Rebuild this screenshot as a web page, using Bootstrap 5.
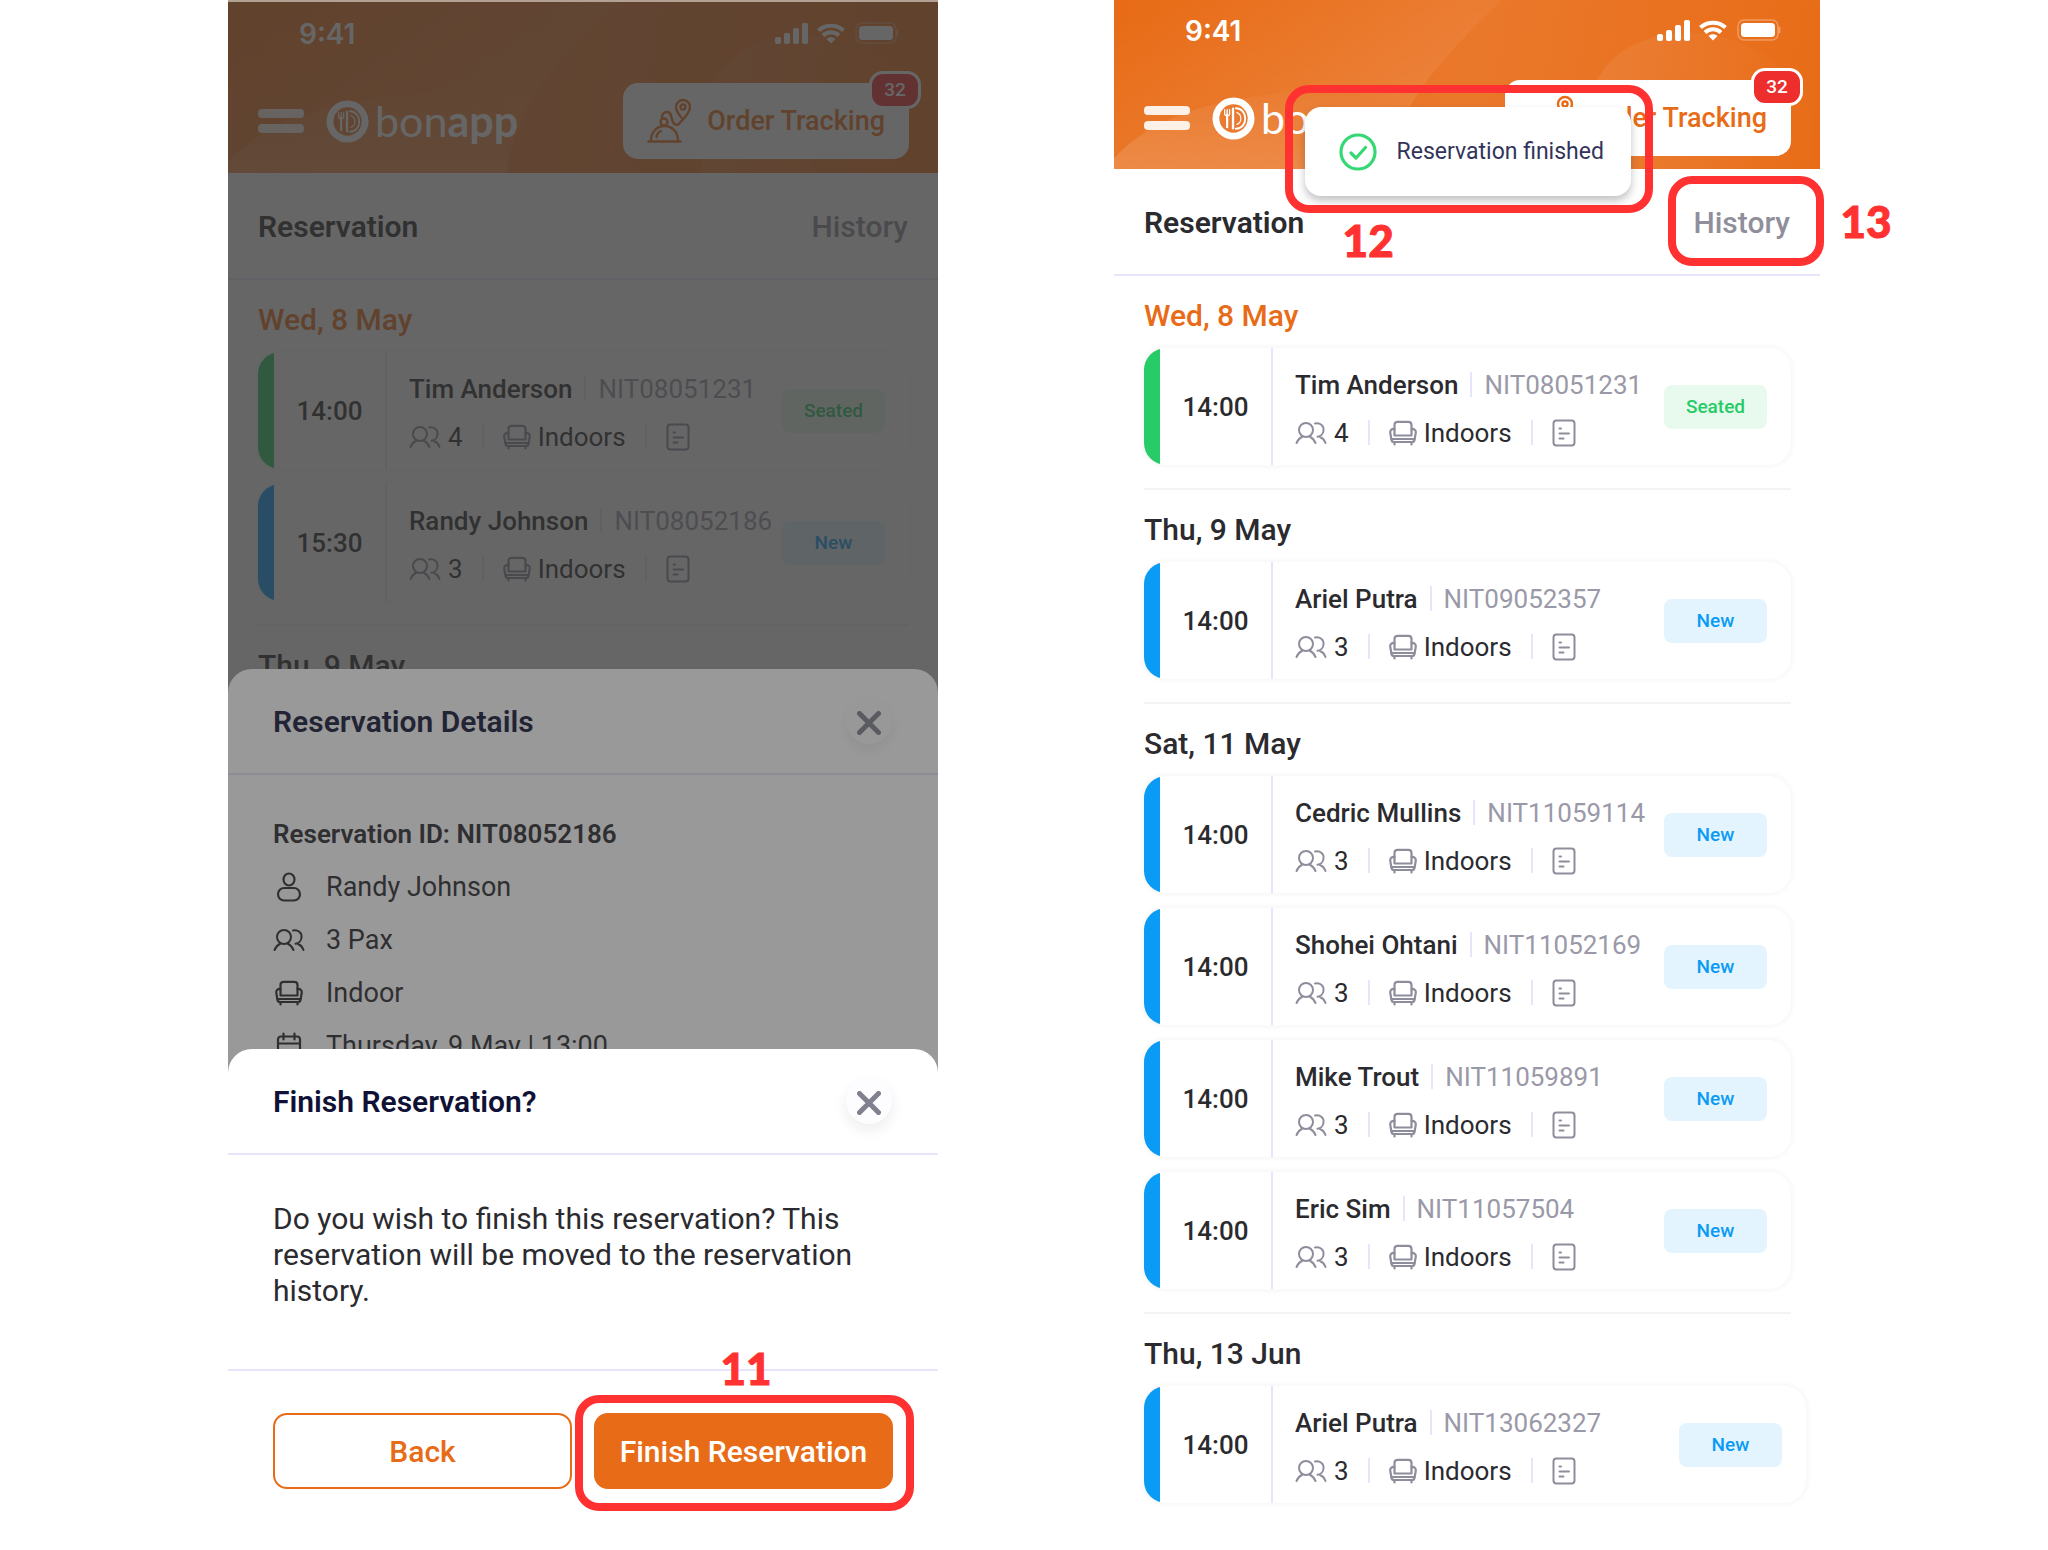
<!DOCTYPE html>
<html lang="en">
<head>
<meta charset="utf-8">
<meta name="viewport" content="width=device-width, initial-scale=1">
<title>Bonapp – finish a reservation</title>
<link href="https://cdn.jsdelivr.net/npm/bootstrap@5.3.0/dist/css/bootstrap.min.css" rel="stylesheet">
<style>
  :root { --brand:#e86c17; --ink:#2b2b2f; --muted:#9a99a8; --line:#e6e5fb; --callout:#ff3131; }
  body { font-family:Roboto,"Liberation Sans",sans-serif; font-size:26px; line-height:32px; color:var(--ink); background:#fff; }
  .guide { display:grid; grid-template-columns:228fr 710fr 176fr 706fr 228fr; min-height:100vh; }
  .phone { position:relative; background:#fff; }
  .phone-a { grid-column:2; border-top:2px solid #b3a293; overflow:hidden; }
  .phone-b { grid-column:4; }

  .app-head { position:relative; height:169px; padding:0 29px 0 30px; background:linear-gradient(100deg,#e86c17 0%,#ea782b 50%,#e86c17 100%); color:#fff; }
  .app-head > .decor { position:absolute; inset:0; width:100%; height:100%; }
  .status { position:relative; height:61px; padding:0 10px 0 41px; font-family:Inter,"Liberation Sans",sans-serif; font-weight:600; font-size:28px; }
  .brandbar { position:relative; height:114px; }
  .burger { width:46px; height:24px; padding:0; border:0; background:none; }
  .burger i { display:block; height:9px; border-radius:4px; background:#fdf0e7; }
  .burger i + i { margin-top:6px; }
  .plate { margin-left:22px; margin-right:6px; }
  .wordmark { font-family:Lato,"Liberation Sans",sans-serif; font-size:43px; line-height:42px; color:#fff; text-decoration:none; }
  .btn-track { position:relative; height:76px; padding:0 24px; border:0; border-radius:15px; background:#fff; color:var(--brand); font-size:27px; font-weight:500; }
  .btn-track:hover { background:#fff; color:var(--brand); }
  .count { position:absolute; top:-12px; right:-12px; width:52px; height:38px; border:3px solid #fff; border-radius:14px; background:#ee2d2d; color:#fff; font-size:19px; line-height:32px; text-align:center; }
  .phone-a .app-head { height:171px; padding-top:1px; }

  .tabs { height:107px; padding:2px 30px 0; border-bottom:2px solid var(--line); font-size:30px; font-weight:500; }
  .tabs a { color:inherit; text-decoration:none; }
  .tabs .on { font-weight:600; }
  .tabs .off { position:relative; color:#8f8e9b; }
  .list { padding:0 29px 0 30px; }
  .day { margin:0; height:72px; padding-top:20px; font-size:30px; line-height:40px; font-weight:500; }
  .day.today { color:var(--brand); }
  .slots { padding-bottom:23px; border-bottom:2px solid #f3f3f5; }
  .slots.last { margin-right:-15px; border:0; }
  .slot { height:117px; border-radius:22px; background:#fff; box-shadow:0 0 6px rgba(40,40,70,.07); overflow:hidden; }
  .slot + .slot { margin-top:15px; }
  .slot .edge { width:16px; flex:none; background:#0a9bf5; }
  .slot .edge.ok { background:#27cb67; }
  .slot .hour { width:113px; flex:none; border-right:2px solid var(--line); font-weight:500; }
  .slot .info { padding:4px 0 0 22px; gap:16px; white-space:nowrap; }
  .slot .who { font-weight:500; }
  .slot .ref { color:var(--muted); font-weight:400; }
  .slot svg { color:#8e8d9c; margin-right:7px; }
  .vr-l { width:2px; height:25px; background:var(--line); flex:none; }
  .meta-line .vr-l { margin:0 19px; }
  .who-line { gap:12px; }
  .pill { width:103px; height:44px; margin-right:24px; border-radius:8px; background:#e3f4fe; color:#0a9bf5; font-size:19px; font-weight:500; flex:none; }
  .pill.ok { background:#e8faee; color:#27cb67; }

  .scrim { position:absolute; inset:0; background:rgba(51,51,51,.5); }
  .sheet { position:absolute; left:0; right:0; bottom:0; border-radius:24px 24px 0 0; background:#fff; }
  .sheet-head { height:106px; padding:0 46px 0 45px; border-bottom:2px solid var(--line); }
  .sheet-head h2 { margin:0; padding-top:2px; font-size:30px; line-height:40px; font-weight:600; color:#101235; }
  .x-btn { width:46px; height:46px; padding:0; border:0; border-radius:50%; background:#fdfdff; box-shadow:0 6px 14px rgba(20,20,50,.08); color:#80818f; }
  .details { padding:32px 46px 478px 45px; font-size:27px; }
  .details li { height:53px; }
  .details li svg { width:32px; margin-right:21px; flex:none; }
  .details .lead-line { height:53px; font-size:26px; font-weight:600; }
  .ask { height:214px; padding:46px 45px 0; margin:0; font-size:30px; line-height:36px; }
  .sheet-foot { padding:42px 45px 61px; border-top:2px solid var(--line); gap:22px; }
  .sheet-foot .slotbtn { position:relative; flex:1 1 0; }
  .btn-app { width:100%; height:76px; padding:0; border:2px solid var(--brand); border-radius:14px; font-size:30px; font-weight:500; white-space:nowrap; color:var(--brand); background:#fff; }
  .btn-app.fill { background:var(--brand); color:#fff; }

  .ring { position:absolute; border:8px solid var(--callout); border-radius:24px; pointer-events:none; }
  .tag { position:absolute; font-family:Lato,"Liberation Sans",sans-serif; font-weight:900; font-size:44px; line-height:44px; color:var(--callout); -webkit-text-stroke:1px var(--callout); }
  .ring-btn { inset:-18px -21px -22px -19px; }
  .tag-btn { left:50%; bottom:99px; margin-left:-23px; }
  .ring-hist { inset:-31px -34px -27px -25px; }
  .tag-hist { left:147px; top:-8px; }
  .toast-app { position:absolute; z-index:3; left:27%; top:107px; width:326px; height:89px; padding-left:34px; gap:20px; border-radius:16px; background:#fff; box-shadow:0 5px 8px rgba(40,40,50,.28); color:#34345a; font-size:23px; white-space:nowrap; }
  .ring-toast { inset:-22px -22px -17px -20px; }
  .tag-toast { left:38px; top:111px; }
</style>
</head>
<body>

<svg width="0" height="0" class="position-absolute" aria-hidden="true">
  <defs>
    <linearGradient id="glow" x1="0" y1="0" x2=".6" y2="1"><stop offset=".1" stop-color="#fff" stop-opacity="0"/><stop offset="1" stop-color="#fff" stop-opacity=".1"/></linearGradient>
    <linearGradient id="hill" x1="0" y1="1" x2="1" y2=".3"><stop offset="0" stop-color="#fff" stop-opacity=".14"/><stop offset="1" stop-color="#fff" stop-opacity="0"/></linearGradient>
    <linearGradient id="moon" x1="0" y1="0" x2="1" y2="0"><stop offset="0" stop-color="#fff" stop-opacity=".08"/><stop offset="1" stop-color="#fff" stop-opacity="0"/></linearGradient>
    <symbol id="people" viewBox="0 0 32 24"><g fill="none" stroke="currentColor" stroke-width="2" stroke-linecap="round" stroke-linejoin="round"><circle cx="11" cy="9" r="7"/><path d="M1.500 22c1.500-3.500 4-5.500 6-6.500M20.500 22c-1.500-3.500-4-5.500-6-6.500M20 2.500c5-1 9 2 8.500 7-.3 3.500-3 6-6 6.200M25 16c2.500 1 4.500 3 5.500 6"/></g></symbol>
    <symbol id="sofa" viewBox="0 0 28 26"><g fill="none" stroke="currentColor" stroke-width="2.200" stroke-linejoin="round" stroke-linecap="round"><path d="M5.500 9V5c0-2 1.200-3.200 3.200-3.200h10.600c2 0 3.200 1.200 3.200 3.200v4"/><path d="M5.500 9v6.500h17V9c3-.3 4.700 1.500 4.200 4l-1.200 7c-.3 1.500-1.200 2-2.500 2H5c-1.300 0-2.200-.5-2.500-2L1.300 13c-.5-2.500 1.200-4.300 4.200-4z"/><path d="M2.500 19h23M5.500 22v2.500M22.500 22v2.500"/></g></symbol>
    <symbol id="note" viewBox="0 0 24 28"><g fill="none" stroke="currentColor" stroke-width="2" stroke-linecap="round"><rect x="1.500" y="1.500" width="21" height="25" rx="3"/><path d="M7.500 9.500h1.500M7.500 14.500h9.500M7.500 19.500h4"/></g></symbol>
    <symbol id="person" viewBox="0 0 26 30"><g fill="none" stroke="currentColor" stroke-width="2.200"><ellipse cx="13" cy="7.500" rx="5.500" ry="6"/><rect x="2" y="16" width="22" height="12.500" rx="6.200"/></g></symbol>
    <symbol id="calendar" viewBox="0 0 26 28"><g fill="none" stroke="currentColor" stroke-width="2.200" stroke-linecap="round"><rect x="2" y="4.500" width="22" height="21" rx="3"/><path d="M2 11.500h22M7.500 1.500v6M18.500 1.500v6"/></g></symbol>
    <symbol id="cross" viewBox="0 0 24 24"><path d="M2.500 2.500l19 19M21.500 2.500l-19 19" stroke="currentColor" stroke-width="5" stroke-linecap="round"/></symbol>
    <symbol id="signals" viewBox="0 0 124 24">
      <g fill="#fff"><rect x="0" y="15" width="6" height="7" rx="2"/><rect x="9" y="11" width="6" height="11" rx="2"/><rect x="18" y="6" width="6" height="16" rx="2"/><rect x="27" y="1" width="6" height="21" rx="2"/></g>
      <g fill="none" stroke="#fff" stroke-width="4"><path d="M43.500 8.500c7-6.500 18-6.500 25 0M48 13.500c4.500-4.300 11.500-4.300 16 0"/></g><path d="M51.500 17c2.500-2.300 6.500-2.300 9 0L56 21.500z" fill="#fff"/>
      <rect x="81" y="1" width="40" height="20" rx="6" fill="none" stroke="#fff" stroke-opacity=".3" stroke-width="1.500"/><rect x="84" y="4" width="34" height="14" rx="3.500" fill="#fff"/><path d="M122.500 8v6" stroke="#fff" stroke-opacity=".3" stroke-width="2"/>
    </symbol>
    <symbol id="plate" viewBox="0 0 44 44"><circle cx="22" cy="22" r="21.500" fill="#fff"/><circle cx="22" cy="22" r="14.500" fill="#e97a30"/><g fill="none" stroke="#fff" stroke-linecap="round"><path d="M24.500 11.500c6 0 9.500 5 9.500 10.500s-3.500 10.500-9.500 10.500" stroke-width="2"/><path d="M21.500 12v20" stroke-width="2.400"/><path d="M15.500 18v13" stroke-width="2.200"/><path d="M13 13v4.500c0 2.500 5 2.500 5 0V13M15.500 13v5" stroke-width="1.300"/><path d="M25.500 16c3 1 4 3.500 4 6s-1 5-4 6" stroke-width="1.200"/></g></symbol>
    <symbol id="track" viewBox="0 0 44 46"><g fill="none" stroke="currentColor" stroke-width="2.400" stroke-linecap="round" stroke-linejoin="round"><path d="M1.500 43.500h32M4 42.500c0-8 5.500-14.500 13.500-14.500S31 34.500 31 42.500M9.500 39c.5-3 2-5 4.500-6"/><circle cx="17" cy="24" r="3.500"/><path d="M15 20.500c-.5-4 2-6.500 5-6.500 4.500 0 4 5 5.500 9 1.500 4.500 6 5 8 1l2.500-2.500"/><path d="M36 21.500c-4-4.500-7-8-7-12.500a7 7 0 0 1 14 0c0 4.500-3 8-7 12.500z"/><circle cx="36" cy="9" r="2.500"/></g></symbol>
    <symbol id="waves" viewBox="0 0 706 169" preserveAspectRatio="none"><path d="M0 0h388C345 40 315 75 298 103c-10 22-18 47-20 66H0z" fill="url(#glow)"/><path d="M0 158C40 118 90 92 278 85V169H0z" fill="url(#hill)"/><path d="M482 82c14-28 40-46 90-50 50 0 100 30 134 70v67H470z" fill="url(#moon)"/></symbol>
    <symbol id="okay" viewBox="0 0 38 38"><g fill="none" stroke="#35d873" stroke-width="3.200" stroke-linecap="round" stroke-linejoin="round"><circle cx="19" cy="19" r="17"/><path d="M12 20l5 5 9.500-10.500"/></g></symbol>
  </defs>
</svg>

<main class="guide">

  <section class="phone phone-a">
    <header class="app-head">
      <svg class="decor" aria-hidden="true"><use href="#waves"/></svg>
      <div class="status d-flex align-items-center justify-content-between"><span>9:41</span><svg width="124" height="24"><use href="#signals"/></svg></div>
      <div class="brandbar d-flex align-items-center justify-content-between">
        <div class="d-flex align-items-center">
          <button class="burger" aria-label="Menu"><i></i><i></i></button>
          <svg class="plate" width="43" height="43"><use href="#plate"/></svg>
          <a href="#" class="wordmark">bon<b>app</b></a>
        </div>
        <button class="btn btn-track d-flex align-items-center gap-3"><svg width="44" height="46"><use href="#track"/></svg>Order Tracking<span class="count">32</span></button>
      </div>
    </header>
    <nav class="tabs d-flex align-items-center justify-content-between"><a href="#" class="on">Reservation</a><a href="#" class="off">History</a></nav>
    <div class="list">
      <h3 class="day today">Wed, 8 May</h3>
      <div class="slots">
        <article class="slot d-flex"><div class="edge ok"></div><div class="hour d-flex align-items-center justify-content-center">14:00</div>
          <div class="info d-flex flex-column justify-content-center flex-grow-1"><div class="who-line d-flex align-items-center"><span class="who">Tim Anderson</span><span class="vr-l"></span><span class="ref">NIT08051231</span></div>
            <div class="meta-line d-flex align-items-center"><svg width="32" height="24"><use href="#people"/></svg><span>4</span><span class="vr-l"></span><svg width="28" height="26"><use href="#sofa"/></svg><span>Indoors</span><span class="vr-l"></span><svg width="24" height="28"><use href="#note"/></svg></div></div>
          <span class="pill ok d-flex align-items-center justify-content-center align-self-center">Seated</span></article>
        <article class="slot d-flex"><div class="edge"></div><div class="hour d-flex align-items-center justify-content-center">15:30</div>
          <div class="info d-flex flex-column justify-content-center flex-grow-1"><div class="who-line d-flex align-items-center"><span class="who">Randy Johnson</span><span class="vr-l"></span><span class="ref">NIT08052186</span></div>
            <div class="meta-line d-flex align-items-center"><svg width="32" height="24"><use href="#people"/></svg><span>3</span><span class="vr-l"></span><svg width="28" height="26"><use href="#sofa"/></svg><span>Indoors</span><span class="vr-l"></span><svg width="24" height="28"><use href="#note"/></svg></div></div>
          <span class="pill d-flex align-items-center justify-content-center align-self-center">New</span></article>
      </div>
      <h3 class="day">Thu, 9 May</h3>
    </div>

    <div class="scrim"></div>
    <div class="sheet" role="dialog" aria-label="Reservation Details">
      <div class="sheet-head d-flex align-items-center justify-content-between"><h2>Reservation Details</h2><button class="x-btn" aria-label="Close"><svg width="24" height="24"><use href="#cross"/></svg></button></div>
      <div class="details">
        <div class="lead-line d-flex align-items-center">Reservation ID: NIT08052186</div>
        <ul class="list-unstyled m-0">
          <li class="d-flex align-items-center"><svg height="30"><use href="#person"/></svg>Randy Johnson</li>
          <li class="d-flex align-items-center"><svg height="24"><use href="#people"/></svg>3 Pax</li>
          <li class="d-flex align-items-center"><svg height="26"><use href="#sofa"/></svg>Indoor</li>
          <li class="d-flex align-items-center"><svg height="28"><use href="#calendar"/></svg>Thursday, 9 May | 13:00</li>
        </ul>
      </div>
    </div>

    <div class="scrim"></div>
    <div class="sheet" role="dialog" aria-label="Finish Reservation">
      <div class="sheet-head d-flex align-items-center justify-content-between"><h2>Finish Reservation?</h2><button class="x-btn" aria-label="Close"><svg width="24" height="24"><use href="#cross"/></svg></button></div>
      <p class="ask">Do you wish to finish this reservation? This reservation will be moved to the reservation history.</p>
      <div class="sheet-foot d-flex">
        <div class="slotbtn"><button class="btn btn-app">Back</button></div>
        <div class="slotbtn"><button class="btn btn-app fill">Finish Reservation</button><span class="ring ring-btn"></span><span class="tag tag-btn">11</span></div>
      </div>
    </div>
  </section>

  <section class="phone phone-b">
    <header class="app-head">
      <svg class="decor" aria-hidden="true"><use href="#waves"/></svg>
      <div class="status d-flex align-items-center justify-content-between"><span>9:41</span><svg width="124" height="24"><use href="#signals"/></svg></div>
      <div class="brandbar d-flex align-items-center justify-content-between">
        <div class="d-flex align-items-center">
          <button class="burger" aria-label="Menu"><i></i><i></i></button>
          <svg class="plate" width="43" height="43"><use href="#plate"/></svg>
          <a href="#" class="wordmark">bon<b>app</b></a>
        </div>
        <button class="btn btn-track d-flex align-items-center gap-3"><svg width="44" height="46"><use href="#track"/></svg>Order Tracking<span class="count">32</span></button>
      </div>
    </header>
    <div class="toast-app d-flex align-items-center" role="status"><svg width="38" height="38"><use href="#okay"/></svg>Reservation finished<span class="ring ring-toast"></span><span class="tag tag-toast">12</span></div>
    <nav class="tabs d-flex align-items-center justify-content-between"><a href="#" class="on">Reservation</a><a href="#" class="off">History<span class="ring ring-hist"></span><span class="tag tag-hist">13</span></a></nav>
    <div class="list">
      <h3 class="day today">Wed, 8 May</h3>
      <div class="slots">
        <article class="slot d-flex"><div class="edge ok"></div><div class="hour d-flex align-items-center justify-content-center">14:00</div>
          <div class="info d-flex flex-column justify-content-center flex-grow-1"><div class="who-line d-flex align-items-center"><span class="who">Tim Anderson</span><span class="vr-l"></span><span class="ref">NIT08051231</span></div>
            <div class="meta-line d-flex align-items-center"><svg width="32" height="24"><use href="#people"/></svg><span>4</span><span class="vr-l"></span><svg width="28" height="26"><use href="#sofa"/></svg><span>Indoors</span><span class="vr-l"></span><svg width="24" height="28"><use href="#note"/></svg></div></div>
          <span class="pill ok d-flex align-items-center justify-content-center align-self-center">Seated</span></article>
      </div>
      <h3 class="day">Thu, 9 May</h3>
      <div class="slots">
        <article class="slot d-flex"><div class="edge"></div><div class="hour d-flex align-items-center justify-content-center">14:00</div>
          <div class="info d-flex flex-column justify-content-center flex-grow-1"><div class="who-line d-flex align-items-center"><span class="who">Ariel Putra</span><span class="vr-l"></span><span class="ref">NIT09052357</span></div>
            <div class="meta-line d-flex align-items-center"><svg width="32" height="24"><use href="#people"/></svg><span>3</span><span class="vr-l"></span><svg width="28" height="26"><use href="#sofa"/></svg><span>Indoors</span><span class="vr-l"></span><svg width="24" height="28"><use href="#note"/></svg></div></div>
          <span class="pill d-flex align-items-center justify-content-center align-self-center">New</span></article>
      </div>
      <h3 class="day">Sat, 11 May</h3>
      <div class="slots">
        <article class="slot d-flex"><div class="edge"></div><div class="hour d-flex align-items-center justify-content-center">14:00</div>
          <div class="info d-flex flex-column justify-content-center flex-grow-1"><div class="who-line d-flex align-items-center"><span class="who">Cedric Mullins</span><span class="vr-l"></span><span class="ref">NIT11059114</span></div>
            <div class="meta-line d-flex align-items-center"><svg width="32" height="24"><use href="#people"/></svg><span>3</span><span class="vr-l"></span><svg width="28" height="26"><use href="#sofa"/></svg><span>Indoors</span><span class="vr-l"></span><svg width="24" height="28"><use href="#note"/></svg></div></div>
          <span class="pill d-flex align-items-center justify-content-center align-self-center">New</span></article>
        <article class="slot d-flex"><div class="edge"></div><div class="hour d-flex align-items-center justify-content-center">14:00</div>
          <div class="info d-flex flex-column justify-content-center flex-grow-1"><div class="who-line d-flex align-items-center"><span class="who">Shohei Ohtani</span><span class="vr-l"></span><span class="ref">NIT11052169</span></div>
            <div class="meta-line d-flex align-items-center"><svg width="32" height="24"><use href="#people"/></svg><span>3</span><span class="vr-l"></span><svg width="28" height="26"><use href="#sofa"/></svg><span>Indoors</span><span class="vr-l"></span><svg width="24" height="28"><use href="#note"/></svg></div></div>
          <span class="pill d-flex align-items-center justify-content-center align-self-center">New</span></article>
        <article class="slot d-flex"><div class="edge"></div><div class="hour d-flex align-items-center justify-content-center">14:00</div>
          <div class="info d-flex flex-column justify-content-center flex-grow-1"><div class="who-line d-flex align-items-center"><span class="who">Mike Trout</span><span class="vr-l"></span><span class="ref">NIT11059891</span></div>
            <div class="meta-line d-flex align-items-center"><svg width="32" height="24"><use href="#people"/></svg><span>3</span><span class="vr-l"></span><svg width="28" height="26"><use href="#sofa"/></svg><span>Indoors</span><span class="vr-l"></span><svg width="24" height="28"><use href="#note"/></svg></div></div>
          <span class="pill d-flex align-items-center justify-content-center align-self-center">New</span></article>
        <article class="slot d-flex"><div class="edge"></div><div class="hour d-flex align-items-center justify-content-center">14:00</div>
          <div class="info d-flex flex-column justify-content-center flex-grow-1"><div class="who-line d-flex align-items-center"><span class="who">Eric Sim</span><span class="vr-l"></span><span class="ref">NIT11057504</span></div>
            <div class="meta-line d-flex align-items-center"><svg width="32" height="24"><use href="#people"/></svg><span>3</span><span class="vr-l"></span><svg width="28" height="26"><use href="#sofa"/></svg><span>Indoors</span><span class="vr-l"></span><svg width="24" height="28"><use href="#note"/></svg></div></div>
          <span class="pill d-flex align-items-center justify-content-center align-self-center">New</span></article>
      </div>
      <h3 class="day">Thu, 13 Jun</h3>
      <div class="slots last">
        <article class="slot d-flex"><div class="edge"></div><div class="hour d-flex align-items-center justify-content-center">14:00</div>
          <div class="info d-flex flex-column justify-content-center flex-grow-1"><div class="who-line d-flex align-items-center"><span class="who">Ariel Putra</span><span class="vr-l"></span><span class="ref">NIT13062327</span></div>
            <div class="meta-line d-flex align-items-center"><svg width="32" height="24"><use href="#people"/></svg><span>3</span><span class="vr-l"></span><svg width="28" height="26"><use href="#sofa"/></svg><span>Indoors</span><span class="vr-l"></span><svg width="24" height="28"><use href="#note"/></svg></div></div>
          <span class="pill d-flex align-items-center justify-content-center align-self-center">New</span></article>
      </div>
    </div>
  </section>
</main>

<script src="https://cdn.jsdelivr.net/npm/bootstrap@5.3.0/dist/js/bootstrap.bundle.min.js"></script>
</body>
</html>
